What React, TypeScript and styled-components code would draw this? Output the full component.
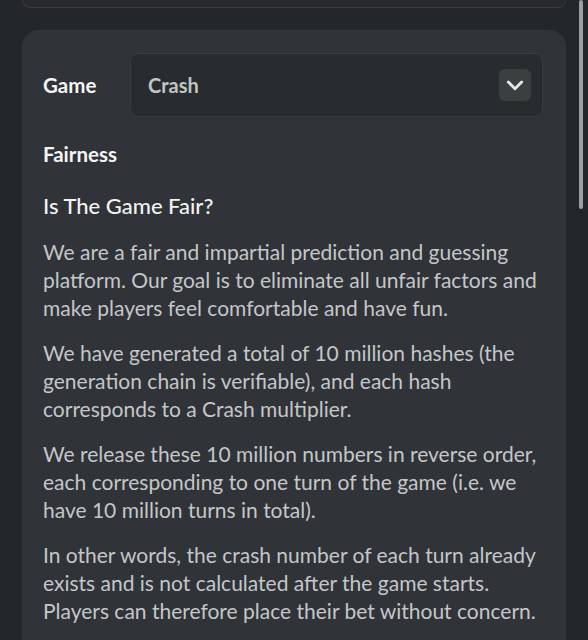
import styled, { createGlobalStyle } from "styled-components";

const GlobalStyle = createGlobalStyle`
  html, body {
    margin: 0;
    padding: 0;
    background: #24272a;
    overflow: hidden;
  }
  body {
    font-family: "Lato", "Noto Sans", sans-serif;
  }
`;

const paragraphs = [
  "We are a fair and impartial prediction and guessing platform. Our goal is to eliminate all unfair factors and make players feel comfortable and have fun.",
  "We have generated a total of 10 million hashes (the generation chain is verifiable), and each hash corresponds to a Crash multiplier.",
  "We release these 10 million numbers in reverse order, each corresponding to one turn of the game (i.e. we have 10 million turns in total).",
  "In other words, the crash number of each turn already exists and is not calculated after the game starts. Players can therefore place their bet without concern.",
];

export default function App() {
  return (
    <>
      <GlobalStyle />
      <Page>
        <PrevCard />
        <Card>
          <SelectRow>
            <Label>Game</Label>
            <Select>
              <span className="value">Crash</span>
              <ChevronButton>
                <svg width="20" height="20" viewBox="0 0 24 24" fill="none">
                  <path
                    d="M4 8.5l8 8 8-8"
                    stroke="#e4e7e7"
                    strokeWidth="3.4"
                    strokeLinecap="round"
                    strokeLinejoin="round"
                  />
                </svg>
              </ChevronButton>
            </Select>
          </SelectRow>
          <Label className="section">Fairness</Label>
          <Heading>Is The Game Fair?</Heading>
          {paragraphs.map((text, index) => (
            <Paragraph key={index}>{text}</Paragraph>
          ))}
        </Card>
      </Page>
      <ScrollThumb />
    </>
  );
}

const Page = styled.div`
  padding: 0 22px;
  height: 640px;
  overflow: hidden;
`;

const PrevCard = styled.div`
  height: 7px;
  border: 1px solid #383b3e;
  border-top: none;
  border-radius: 0 0 12px 12px;
  background: #27292c;
`;

const Card = styled.div`
  margin-top: 22px;
  background: #303337;
  border-radius: 16px;
  padding: 23px 23px 40px 21px;
`;

const SelectRow = styled.div`
  display: flex;
  align-items: center;
`;

const Label = styled.div`
  width: 87px;
  flex-shrink: 0;
  color: #f4f5f5;
  font-size: 20.5px;
  font-weight: 700;
  line-height: 24px;
  &.section {
    margin-top: 25px;
  }
`;

const Select = styled.div`
  flex: 1;
  height: 64px;
  box-sizing: border-box;
  display: flex;
  align-items: center;
  justify-content: space-between;
  padding: 0 11px 0 17px;
  background: #292c2f;
  border: 1px solid #383c3f;
  border-radius: 8px;
  .value {
    color: #c2c5c6;
    font-size: 20px;
    font-weight: 700;
  }
`;

const ChevronButton = styled.div`
  width: 32px;
  height: 32px;
  border-radius: 6px;
  background: #3a3f40;
  display: flex;
  align-items: center;
  justify-content: center;
`;

const Heading = styled.h2`
  margin: 26px 0 0;
  color: #f2f3f3;
  font-size: 22px;
  font-weight: 500;
  line-height: 28px;
`;

const Paragraph = styled.p`
  margin: 17px 0 0;
  color: #c4c7c9;
  font-size: 21px;
  line-height: 28px;
  &:first-of-type {
    margin-top: 18px;
  }
`;

const ScrollThumb = styled.div`
  position: fixed;
  top: 0;
  right: 5px;
  width: 4px;
  height: 209px;
  border-radius: 2px;
  background: #9b9fa2;
`;
